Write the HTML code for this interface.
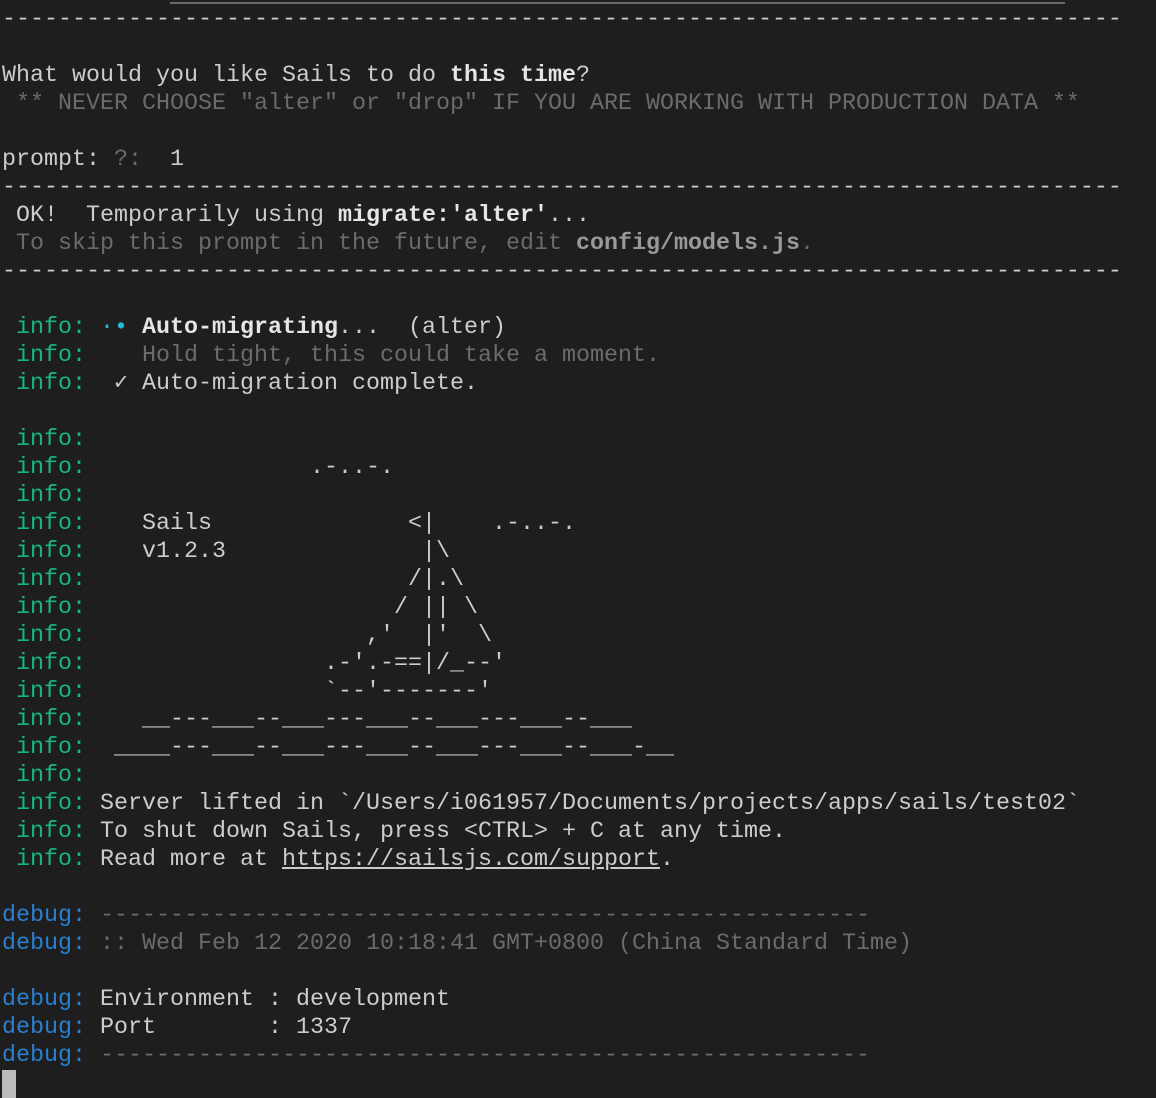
<!DOCTYPE html>
<html><head><meta charset="utf-8"><style>
html,body{margin:0;padding:0;background:#1e1e1e;width:1156px;height:1098px;overflow:hidden;position:relative}
pre{position:absolute;left:2px;top:6px;margin:0;font-family:"Liberation Mono","DejaVu Sans Mono",monospace;font-size:23.33px;line-height:28px;color:#cccccc;white-space:pre}
.g{color:#17b87e}.b{color:#2a7fd0}.d{color:#6b6b6b}.c{color:#29b8db}.w{font-weight:bold;color:#e5e5e5}
.u{text-decoration:underline}
#top{position:absolute;left:170px;top:2px;width:895px;height:2px;background:#6b6b6b}
#cur{position:absolute;left:2px;top:1070px;width:14px;height:28px;background:#bbbbbb}
</style></head><body>
<div id="top"></div>
<pre>--------------------------------------------------------------------------------

What would you like Sails to do <span class="w">this time</span>?
<span class="d"> ** NEVER CHOOSE "alter" or "drop" IF YOU ARE WORKING WITH PRODUCTION DATA **</span>

prompt: <span class="d">?:</span>  1
--------------------------------------------------------------------------------
 OK!  Temporarily using <span class="w">migrate:'alter'</span>...
<span class="d"> To skip this prompt in the future, edit </span><span class="w" style="color:#999">config/models.js</span><span class="d">.</span>
--------------------------------------------------------------------------------

 <span class="g">info:</span> <span class="c">·•</span> <span class="w">Auto-migrating</span>...  (alter)
 <span class="g">info:</span>    <span class="d">Hold tight, this could take a moment.</span>
 <span class="g">info:</span>  ✓ Auto-migration complete.

 <span class="g">info:</span>
 <span class="g">info:</span>                .-..-.
 <span class="g">info:</span>
 <span class="g">info:</span>    Sails              &lt;|    .-..-.
 <span class="g">info:</span>    v1.2.3              |\
 <span class="g">info:</span>                       /|.\
 <span class="g">info:</span>                      / || \
 <span class="g">info:</span>                    ,'  |'  \
 <span class="g">info:</span>                 .-'.-==|/_--'
 <span class="g">info:</span>                 `--'-------'
 <span class="g">info:</span>    __---___--___---___--___---___--___
 <span class="g">info:</span>  ____---___--___---___--___---___--___-__
 <span class="g">info:</span>
 <span class="g">info:</span> Server lifted in `/Users/i061957/Documents/projects/apps/sails/test02`
 <span class="g">info:</span> To shut down Sails, press &lt;CTRL&gt; + C at any time.
 <span class="g">info:</span> Read more at <span class="u">https://sailsjs.com/support</span>.

<span class="b">debug:</span> <span class="d">-------------------------------------------------------</span>
<span class="b">debug:</span> <span class="d">:: Wed Feb 12 2020 10:18:41 GMT+0800 (China Standard Time)</span>

<span class="b">debug:</span> Environment : development
<span class="b">debug:</span> Port        : 1337
<span class="b">debug:</span> <span class="d">-------------------------------------------------------</span>
</pre>
<div id="cur"></div>
</body></html>
